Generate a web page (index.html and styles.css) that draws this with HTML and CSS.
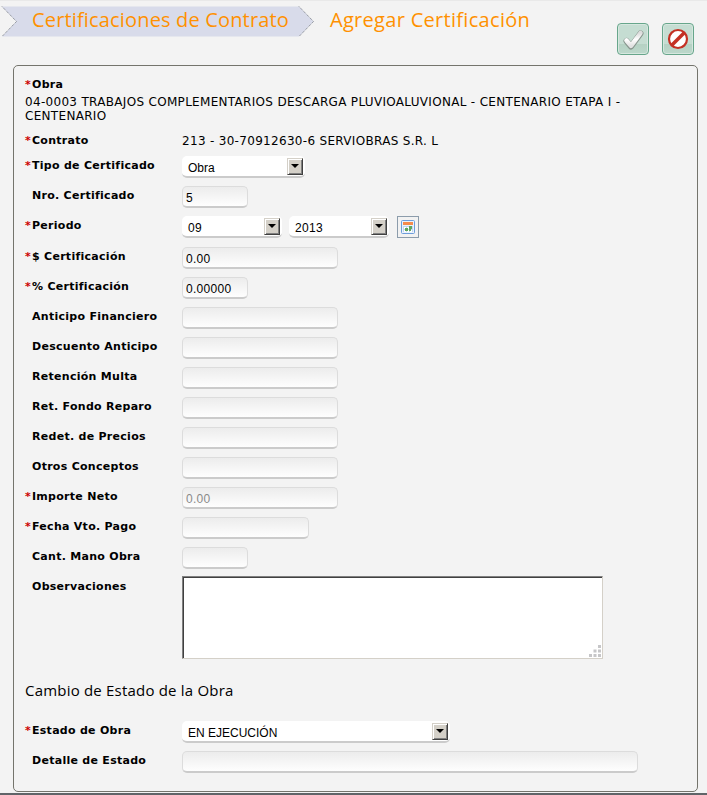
FILE: index.html
```html
<!DOCTYPE html>
<html lang="es">
<head>
<meta charset="utf-8">
<title>Agregar Certificación</title>
<link rel="stylesheet" href="styles.css">
</head>
<body>
<header class="top">
  <nav class="crumbs">
    <div class="crumb">
      <svg class="crumb-bg" width="314" height="32" viewBox="0 0 314 32"><path d="M2 .5H299L313.5 15.5 299 30.5H2L16.500 15.500Z" fill="#d8dbea"/><path d="M2 .5L16.500 15.500 2 30.500M299 .5L313.500 15.500 299 30.500" fill="none" stroke="#777c84" stroke-dasharray="1 1"/></svg>
      <span class="crumb-text first">Certificaciones de Contrato</span>
    </div>
    <span class="crumb-text second">Agregar Certificación</span>
  </nav>
  <div class="actions">
    <button class="action" aria-label="Aceptar">
      <svg width="30" height="30" viewBox="0 0 30 30"><defs><linearGradient id="g" x1="0" y1="0" x2="0" y2="1"><stop offset="0" stop-color="#ddd"/><stop offset=".5" stop-color="#fff"/><stop offset="1" stop-color="#e2e2e2"/></linearGradient></defs><path d="M8.500 17L13 22.500 22.500 9.500" fill="none" stroke="#87958d" stroke-width="6" stroke-linecap="round" stroke-linejoin="round"/><path d="M8.500 16.500L13 21.800 22.500 9" fill="none" stroke="url(#g)" stroke-width="4.600" stroke-linecap="round" stroke-linejoin="round"/></svg>
    </button>
    <button class="action" aria-label="Cancelar">
      <svg width="30" height="30" viewBox="0 0 30 30"><circle cx="15" cy="15" r="9" fill="#fff" stroke="#c43124" stroke-width="2.200"/><path d="M9 21L21 9" stroke="#c43124" stroke-width="3.600"/></svg>
    </button>
  </div>
</header>
<main class="panel">
  <div class="row obra"><label class="req">Obra</label></div>
  <p class="text obra-text">04-0003 TRABAJOS COMPLEMENTARIOS DESCARGA PLUVIOALUVIONAL - CENTENARIO ETAPA I -<br>CENTENARIO</p>
  <div class="row contrato"><label class="req">Contrato</label><span class="text">213 - 30-70912630-6 SERVIOBRAS S.R. L</span></div>
  <div class="row"><label class="req">Tipo de Certificado</label><div class="select w-tipo"><span>Obra</span><i class="arrow"></i></div></div>
  <div class="row"><label>Nro. Certificado</label><input class="w-small" value="5"></div>
  <div class="row periodo"><label class="req">Periodo</label><div class="select num w-mes"><span>09</span><i class="arrow"></i></div><div class="select num w-anio"><span>2013</span><i class="arrow"></i></div>
    <svg class="calendar" width="22" height="22" viewBox="0 0 22 22"><rect x=".5" y=".5" width="21" height="21" fill="#f2f2f2" stroke="#8c9cab"/><rect x="4.500" y="4.500" width="13" height="13" rx="1" fill="#e9f2fc" stroke="#6d9ddb"/><path d="M6 6h10v3H6z" fill="#f58b4c"/><path d="M6 10h10v6H6z" fill="#fff"/><path d="M6 10.500h10M6 13.500h10M6.500 10v6M9.500 10v6M12.500 10v6M15.500 10v6" stroke="#c3d5ee" fill="none"/><path d="M12 10h3v3h-3zM8 12h3v3H8zM12 13h2v2h-2z" fill="#5fa75d"/></svg>
  </div>
  <div class="row"><label class="req">$ Certificación</label><input class="w-mid" value="0.00"></div>
  <div class="row"><label class="req">% Certificación</label><input class="w-small" value="0.00000"></div>
  <div class="row"><label>Anticipo Financiero</label><input class="w-mid"></div>
  <div class="row"><label>Descuento Anticipo</label><input class="w-mid"></div>
  <div class="row"><label>Retención Multa</label><input class="w-mid"></div>
  <div class="row"><label>Ret. Fondo Reparo</label><input class="w-mid"></div>
  <div class="row"><label>Redet. de Precios</label><input class="w-mid"></div>
  <div class="row"><label>Otros Conceptos</label><input class="w-mid"></div>
  <div class="row"><label class="req">Importe Neto</label><input class="w-mid muted" value="0.00" readonly></div>
  <div class="row"><label class="req">Fecha Vto. Pago</label><input class="w-fecha"></div>
  <div class="row"><label>Cant. Mano Obra</label><input class="w-small"></div>
  <div class="row obs"><label>Observaciones</label><div class="area"><textarea></textarea><svg class="grip" width="12" height="12" viewBox="0 0 12 12"><path d="M9 0h3v3H9zM4.500 4.500h3v3h-3zM9 4.500h3v3H9zM0 9h3v3H0zM4.500 9h3v3h-3zM9 9h3v3H9z" fill="#c6c6c8"/></svg></div></div>
  <h2>Cambio de Estado de la Obra</h2>
  <div class="row"><label class="req">Estado de Obra</label><div class="select w-estado"><span>EN EJECUCIÓN</span><i class="arrow"></i></div></div>
  <div class="row"><label>Detalle de Estado</label><input class="w-detalle"></div>
</main>
<footer class="bottom"></footer>
</body>
</html>
```
FILE: styles.css
```css
* { box-sizing: border-box; }
body {
  margin: 0;
  height: 795px;
  overflow: hidden;
  background: #f3f3f3;
  border-top: 1px solid #e9e9e9;
  color: #000;
  font-family: "DejaVu Sans", sans-serif;
  display: flex;
  flex-direction: column;
}
.top { height: 64px; flex: none; display: flex; justify-content: space-between; padding-right: 13px; }
.crumbs { display: flex; padding-top: 5px; }
.crumb { display: grid; width: 314px; height: 32px; }
.crumb > * { grid-area: 1 / 1; }
.crumb-bg { display: block; }
.crumb-text {
  z-index: 1;
  font: 20px/28px "Open Sans", sans-serif;
  color: #ff9100;
  white-space: nowrap;
}
.first { padding-left: 32px; letter-spacing: .16px; }
.second { padding-left: 16px; letter-spacing: .3px; }
.actions { display: flex; gap: 13px; padding-top: 22px; }
.action {
  width: 32px;
  height: 32px;
  padding: 0;
  border: 1px solid #67a68b;
  border-radius: 4px;
  background: linear-gradient(#c5ddd2 0 66%, #b5d1c3 66%, #bcd8cb);
  box-shadow: inset 0 0 0 1px #d6e7df;
}
.action svg { display: block; }
.panel {
  width: 685px;
  height: 727px;
  flex: none;
  margin-left: 13px;
  padding: 9px 11px 0;
  border: 1px solid #74746c;
  border-radius: 5px;
}
.row { display: flex; height: 30px; align-items: flex-start; }
.row.obra { height: 20px; }
.row.contrato { height: 25px; }
.row.periodo { height: 31px; }
.row.obs { height: 104px; margin-top: -1px; }
label {
  width: 157px;
  flex: none;
  padding: 1px 0 0 7px;
  font-size: 11px;
  line-height: 18px;
  font-weight: bold;
  letter-spacing: .28px;
  white-space: nowrap;
}
.obs label { padding-top: 2px; }
label.req { padding-left: 0; }
label.req::before { content: "*"; display: inline-block; width: 7px; letter-spacing: 0; color: #c00; }
.text { margin: 0; font-size: 12px; line-height: 18px; letter-spacing: .31px; white-space: nowrap; }
.contrato .text { padding-top: 1px; }
.obra-text { height: 36px; line-height: 14px; }
input {
  height: 22px;
  padding: 2px 3px 0;
  border: 1px solid #dcdcdc;
  border-bottom: 2px solid #cbcbcb;
  border-radius: 5px;
  background: linear-gradient(#ececec, #fefefe);
  font: 12px "Liberation Sans", sans-serif;
  letter-spacing: .3px;
  color: #000;
  outline: 0;
}
.muted { color: #8a8a8a; }
.w-small { width: 66px; }
.w-mid { width: 156px; }
.w-fecha { width: 127px; }
.w-detalle { width: 456px; }
.select {
  height: 22px;
  display: flex;
  justify-content: space-between;
  padding: 2px 2px 0 6px;
  border-bottom: 2px solid #cbcbcb;
  border-radius: 5px;
  background: #fff;
  font: 12px/20px "Liberation Sans", sans-serif;
}
.num { letter-spacing: .3px; }
.w-tipo { width: 123px; }
.w-mes { width: 100px; margin-right: 7px; }
.w-anio { width: 100px; margin-right: 8px; }
.w-estado { width: 268px; }
.arrow {
  width: 16px;
  height: 17px;
  display: flex;
  justify-content: center;
  padding-top: 5px;
  border: 1px solid #d4d0c8;
  border-right-color: #404040;
  border-bottom-color: #404040;
  box-shadow: inset 1px 1px #fff, inset -1px -1px #808080;
  background: #d4d0c8;
}
.arrow::before { content: ""; width: 0; height: 0; border: 4px solid transparent; border-top-color: #000; border-bottom: 0; }
.area { position: relative; width: 421px; height: 83px; }
textarea {
  display: block;
  width: 421px;
  height: 83px;
  resize: none;
  border: 1px solid #808080;
  border-right-color: #d4d0c8;
  border-bottom-color: #d4d0c8;
  box-shadow: inset 1px 1px #404040;
  background: #fff;
  outline: 0;
}
.grip { position: absolute; right: 2px; bottom: 2px; }
h2 { height: 41px; margin: 0; font: 15px/20px "Open Sans", sans-serif; letter-spacing: .2px; }
.bottom { height: 2px; flex: none; margin-top: 1px; background: #606468; }
```
